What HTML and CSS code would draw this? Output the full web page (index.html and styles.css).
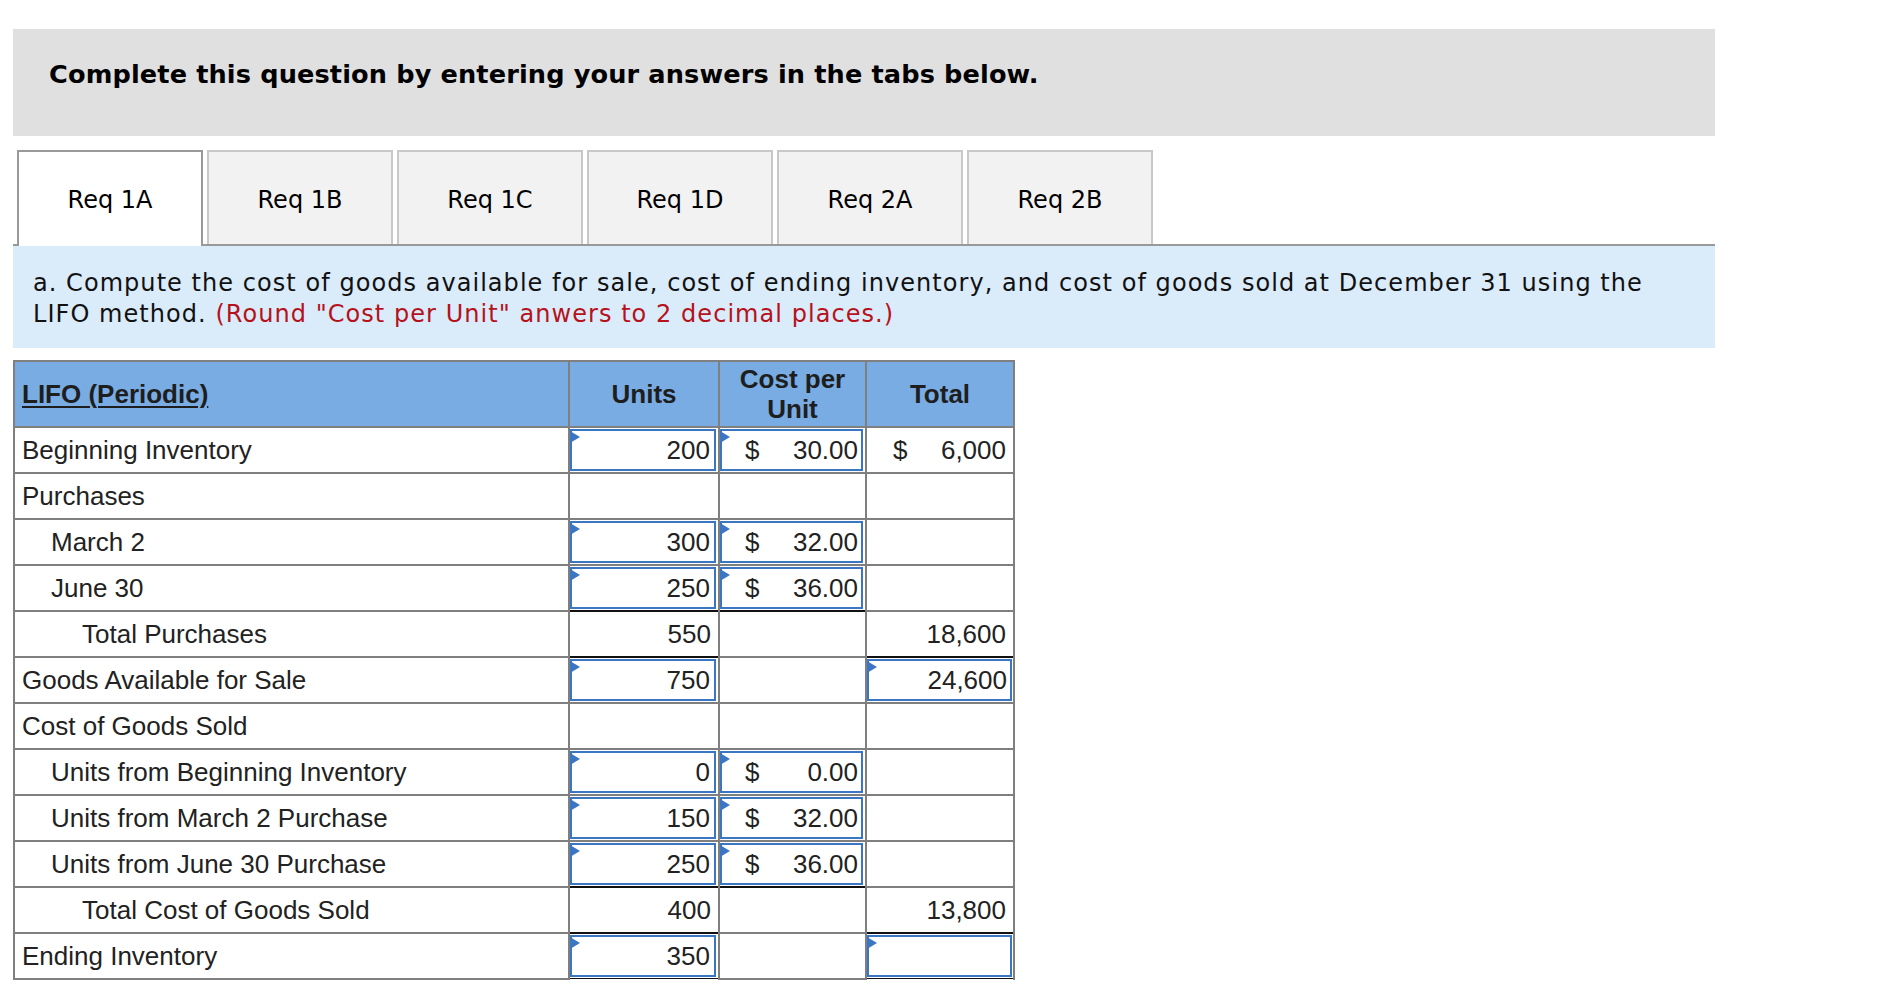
FILE: index.html
```html
<!DOCTYPE html>
<html lang="en">
<head>
<meta charset="utf-8">
<title>LIFO (Periodic)</title>
<link rel="stylesheet" href="styles.css">
</head>
<body>
<div class="page">
  <div class="banner">Complete this question by entering your answers in the tabs below.</div>

  <div class="tabs">
    <div class="tab active">Req 1A</div>
    <div class="tab">Req 1B</div>
    <div class="tab">Req 1C</div>
    <div class="tab">Req 1D</div>
    <div class="tab">Req 2A</div>
    <div class="tab">Req 2B</div>
  </div>

  <div class="prompt">a. Compute the cost of goods available for sale, cost of ending inventory, and cost of goods sold at December 31 using the LIFO method. <span class="note">(Round "Cost per Unit" anwers to 2 decimal places.)</span></div>

  <div class="sheet">
    <div class="hd hd-left"><span class="hd-link">LIFO (Periodic)</span></div>
    <div class="hd">Units</div>
    <div class="hd">Cost per Unit</div>
    <div class="hd">Total</div>

    <div class="lbl">Beginning Inventory</div>
    <div class="cell"><div class="inp num">200</div></div>
    <div class="cell"><div class="inp money"><span>$</span><span>30.00</span></div></div>
    <div class="cell total money"><span>$</span><span>6,000</span></div>

    <div class="lbl">Purchases</div>
    <div class="cell"></div>
    <div class="cell"></div>
    <div class="cell"></div>

    <div class="lbl i1">March 2</div>
    <div class="cell"><div class="inp num">300</div></div>
    <div class="cell"><div class="inp money"><span>$</span><span>32.00</span></div></div>
    <div class="cell"></div>

    <div class="lbl i1">June 30</div>
    <div class="cell ul"><div class="inp num">250</div></div>
    <div class="cell ul"><div class="inp money"><span>$</span><span>36.00</span></div></div>
    <div class="cell"></div>

    <div class="lbl i2">Total Purchases</div>
    <div class="cell num plain ul">550</div>
    <div class="cell"></div>
    <div class="cell num plain ul">18,600</div>

    <div class="lbl">Goods Available for Sale</div>
    <div class="cell"><div class="inp num">750</div></div>
    <div class="cell"></div>
    <div class="cell"><div class="inp num wide">24,600</div></div>

    <div class="lbl">Cost of Goods Sold</div>
    <div class="cell"></div>
    <div class="cell"></div>
    <div class="cell"></div>

    <div class="lbl i1">Units from Beginning Inventory</div>
    <div class="cell"><div class="inp num">0</div></div>
    <div class="cell"><div class="inp money"><span>$</span><span>0.00</span></div></div>
    <div class="cell"></div>

    <div class="lbl i1">Units from March 2 Purchase</div>
    <div class="cell"><div class="inp num">150</div></div>
    <div class="cell"><div class="inp money"><span>$</span><span>32.00</span></div></div>
    <div class="cell"></div>

    <div class="lbl i1">Units from June 30 Purchase</div>
    <div class="cell ul"><div class="inp num">250</div></div>
    <div class="cell ul"><div class="inp money"><span>$</span><span>36.00</span></div></div>
    <div class="cell"></div>

    <div class="lbl i2">Total Cost of Goods Sold</div>
    <div class="cell num plain ul">400</div>
    <div class="cell"></div>
    <div class="cell num plain ul">13,800</div>

    <div class="lbl">Ending Inventory</div>
    <div class="cell dbl"><div class="inp num">350</div></div>
    <div class="cell"></div>
    <div class="cell dbl"><div class="inp num wide"></div></div>
  </div>
</div>
</body>
</html>
```

FILE: styles.css
```css
html, body {
  margin: 0;
  padding: 0;
  background: #ffffff;
}

.page {
  padding: 29px 0 0 13px;
  width: 1702px;
}

.banner {
  background: #e0e0e0;
  height: 107px;
  box-sizing: border-box;
  padding: 30px 36px 0;
  font-family: "DejaVu Sans", Verdana, sans-serif;
  font-weight: bold;
  font-size: 25.6px;
  line-height: 31px;
  letter-spacing: 0.13px;
  color: #000;
}

.tabs {
  display: flex;
  align-items: flex-start;
  gap: 4px;
  margin-top: 14px;
  padding-left: 4px;
  border-bottom: 2px solid #999999;
}

.tab {
  width: 186px;
  height: 94px;
  box-sizing: border-box;
  border: 2px solid #c8c8c8;
  border-bottom: none;
  background: #f2f2f2;
  display: flex;
  align-items: center;
  justify-content: center;
  padding-top: 4px;
  font-family: "DejaVu Sans", Verdana, sans-serif;
  font-size: 24px;
  color: #000;
}

.tab.active {
  background: #ffffff;
  border-color: #999999;
  height: 96px;
  margin-bottom: -2px;
  padding-top: 2px;
}

.prompt {
  background: #daebf9;
  height: 102px;
  box-sizing: border-box;
  padding: 22px 20px 0 20px;
  font-family: "DejaVu Sans", Verdana, sans-serif;
  font-size: 24px;
  line-height: 31.3px;
  letter-spacing: 1.05px;
  color: #111;
}

.note {
  color: #b5121b;
}

.sheet {
  margin-top: 12px;
  width: 1002px;
  box-sizing: border-box;
  display: grid;
  grid-template-columns: 553px 148px 145px 146px;
  grid-template-rows: 64px repeat(12, 44px);
  gap: 2px;
  padding: 2px;
  background: #7f7f7f;
  font-family: "Liberation Sans", Arial, sans-serif;
  font-size: 26px;
  color: #222;
}

.hd {
  background: #78ace3;
  font-weight: bold;
  text-align: center;
  display: flex;
  align-items: center;
  justify-content: center;
  line-height: 30.5px;
  color: #1e1e1e;
  padding: 0 6px;
}

.hd-left {
  justify-content: flex-start;
  text-align: left;
  padding: 0 7px;
}

.hd-link {
  text-decoration: underline;
  text-decoration-thickness: 2px;
  text-underline-offset: 3px;
}

.lbl {
  background: #fff;
  display: flex;
  align-items: center;
  padding-left: 7px;
  white-space: nowrap;
}

.lbl.i1 { padding-left: 36px; }
.lbl.i2 { padding-left: 67px; }

.cell {
  background: #fff;
  display: flex;
  align-items: stretch;
  position: relative;
}

.cell.plain {
  align-items: center;
  justify-content: flex-end;
  padding-right: 7px;
}

.cell.total {
  align-items: center;
  justify-content: space-between;
  padding: 0 7px 0 26px;
}

.cell.ul {
  box-shadow: 0 2px 0 #111;
}

.cell.dbl {
  box-shadow: 0 1px 0 #111, 0 3px 0 #fff, 0 4px 0 #111;
}

.inp {
  position: relative;
  flex: 1;
  margin: 1px 2px 1px 0;
  border: 2px solid #3b76c4;
  background: #fff;
  display: flex;
  align-items: center;
}

.inp::before {
  content: "";
  position: absolute;
  left: -2px;
  top: 0;
  width: 0;
  height: 0;
  border-left: 10px solid #3b76c4;
  border-top: 6px solid transparent;
  border-bottom: 6px solid transparent;
}

.inp.num {
  justify-content: flex-end;
  padding-right: 4px;
}

.inp.wide {
  margin-right: 1px;
  padding-right: 3px;
}

.inp.money {
  justify-content: space-between;
  padding: 0 3px 0 23px;
}
```
